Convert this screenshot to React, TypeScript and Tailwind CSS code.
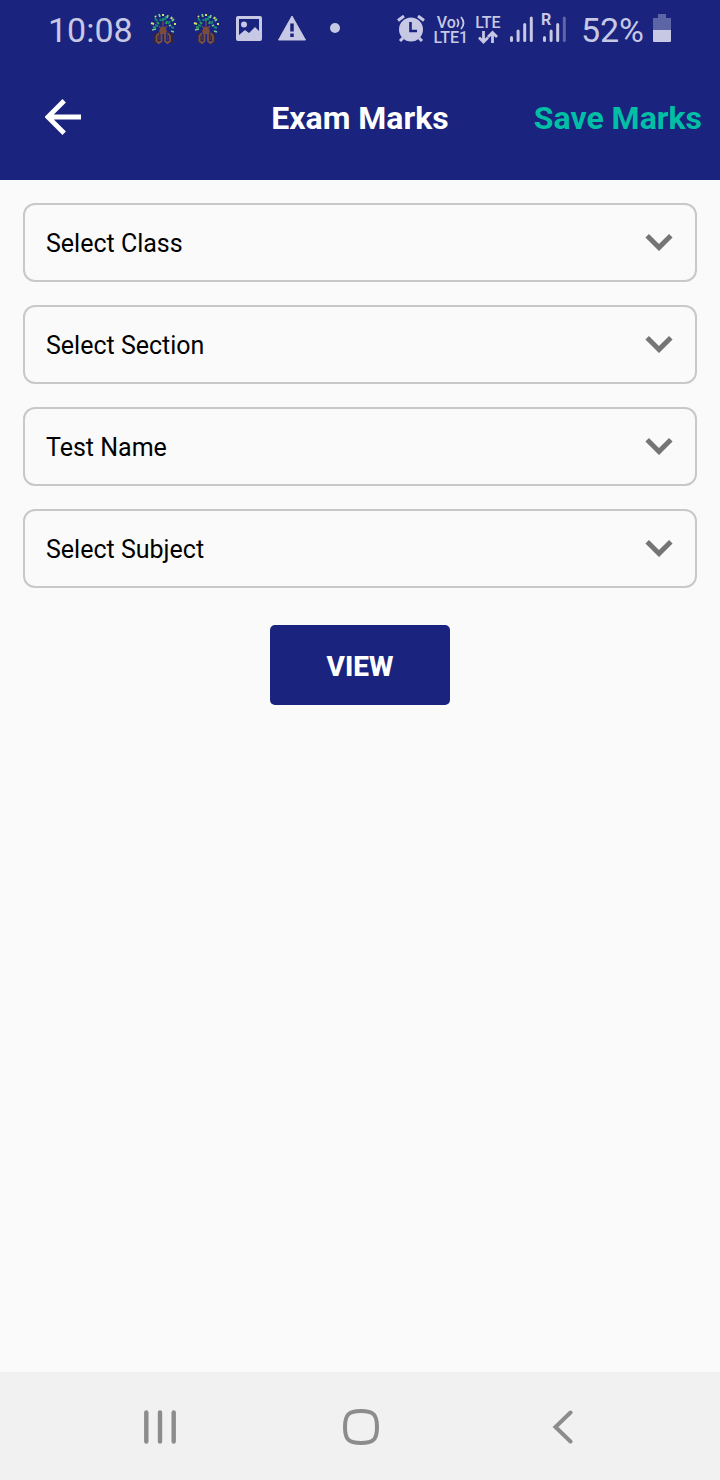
import React from "react";

const fields = [
  { id: "class", label: "Select Class" },
  { id: "section", label: "Select Section" },
  { id: "test", label: "Test Name" },
  { id: "subject", label: "Select Subject" },
];

function TreeIcon() {
  return (
    <svg className="h-8 w-7 shrink-0" viewBox="0 0 28 32" fill="none" aria-hidden="true">
      <path d="M5 20h5v10H5zM19 20h5v10h-4z" fill="#33253f" />
      <path d="M14 8v9M14 18l-4-5M14 18l4-5" stroke="#5d4660" strokeWidth="1.6" />
      <path d="M12 14h4l2 4-1 3h-6l-1-3z" fill="#7a4a3a" />
      <path d="M12.500 20v8l-2.500 2-2.500-2v-5l2.500-3M16 20v8l2.500 2 2.500-2v-5l-2.500-3" stroke="#7d5140" strokeWidth="1.8" />
      <path d="M10 22v5M18.500 22v5" stroke="#4a3350" strokeWidth="1.6" />
      <path d="M6 5l2 3M11 6l1 2M17 3l-1 4M21 8l-2 3M6 12l3 1M22 14l3 1M14 5v3" stroke="#158577" strokeWidth="2.200" />
      <path d="M10 1l1 3M3 17l4-1M19 2l-1 3M25 6l-2 2M20 13l2-1M22 18l3 1" stroke="#76c893" strokeWidth="1.800" />
      <path d="M6 3l1 1M2 10l3 1M14 1v2M23 4l-1 2M25 11h2" stroke="#d5e36a" strokeWidth="2" />
      <path d="M8 9l2 2M18 8l-1 3M4 14l3 1" stroke="#2c9c58" strokeWidth="2" />
    </svg>
  );
}

function StatusBar() {
  return (
    <div className="flex h-[60px] items-center justify-between pr-12 pl-12 text-[#c6c8e4]">
      <div className="flex items-center">
        <span className="w-[101px] text-[34px] leading-[60px]">10:08</span>
        <span className="flex -translate-y-px items-center gap-[15px]">
          <TreeIcon />
          <TreeIcon />
          <svg className="h-8 w-7" viewBox="0 0 28 32" aria-hidden="true">
            <path
              fillRule="evenodd"
              fill="currentColor"
              d="M3 3h22a2 2 0 0 1 2 2v21a2 2 0 0 1-2 2H3a2 2 0 0 1-2-2V5a2 2 0 0 1 2-2zm1 3v16l6-5 4 3 6-6 4 4V6z"
            />
            <circle cx="9" cy="11.500" r="3" fill="currentColor" />
          </svg>
          <svg className="h-8 w-7" viewBox="0 0 28 32" aria-hidden="true">
            <path d="M14 3 27.500 27H.5z" fill="currentColor" stroke="currentColor" strokeLinejoin="round" />
            <path d="M14 10.500v8M14 20.500v3.500" stroke="#1a237e" strokeWidth="3.500" />
          </svg>
          <svg className="h-8 w-7" viewBox="0 0 28 32" aria-hidden="true">
            <circle cx="14" cy="15" r="5" fill="currentColor" />
          </svg>
        </span>
      </div>
      <div className="flex items-center">
        <svg className="h-[30px] w-[30px]" viewBox="0 0 30 30" fill="none" aria-hidden="true">
          <circle cx="15" cy="14.500" r="12" fill="currentColor" />
          <path d="M2 5.500 8 1M28 5.500 22 1M7 23l-3 3M23 23l3 3" stroke="currentColor" strokeWidth="3" />
          <path d="M14.500 7v9H21" stroke="#1a237e" strokeWidth="2.600" />
        </svg>
        <span className="ml-2 flex w-[34px] flex-col items-center text-[16px] leading-[15px] font-medium">
          <span className="flex items-center">
            Vo
            <svg className="h-[14px] w-[9px] shrink-0" viewBox="0 0 9 14" fill="none" stroke="currentColor" strokeWidth="1.800" aria-hidden="true">
              <path d="M1 3q3 4 0 8M5 1q5 6 0 12" />
            </svg>
          </span>
          <span>LTE1</span>
        </span>
        <span className="ml-1.5 flex w-[28px] flex-col items-center text-[16px] leading-[15px] font-medium">
          <span>LTE</span>
          <svg className="h-[15px] w-5" viewBox="0 0 20 15" fill="none" stroke="currentColor" strokeWidth="2.800" aria-hidden="true">
            <path d="M5.500 1v11M1 7.500l4.500 4.500L10 7.500M14.500 13V3M10 7l4.500-4.500L19 7" />
          </svg>
        </span>
        <svg className="ml-2 h-8 w-6" viewBox="0 0 24 32" stroke="currentColor" strokeWidth="3" strokeLinecap="round" aria-hidden="true">
          <path d="M1.500 23.500v3M8.100 17v9.500M14.700 10.500v16M21.300 4v22.500" />
        </svg>
        <span className="relative ml-[9px] h-8 w-6">
          <svg className="h-8 w-6" viewBox="0 0 24 32" stroke="currentColor" strokeWidth="3" strokeLinecap="round" aria-hidden="true">
            <path d="M1.500 23.500v3M8.100 17v9.500M14.700 10.500v16" />
            <path d="M21.300 4v22.500" opacity="0.400" />
          </svg>
          <span className="absolute -top-0.5 -left-0.5 text-[16px] leading-4 font-bold">R</span>
        </span>
        <span className="ml-[14px] text-[34px] leading-[60px]">52%</span>
        <svg className="ml-2 h-8 w-5" viewBox="0 0 20 32" fill="currentColor" aria-hidden="true">
          <path d="M6 0h8v4h5v12H1V4h5z" opacity="0.400" />
          <path d="M1 16h18v11a1 1 0 0 1-1 1H2a1 1 0 0 1-1-1z" />
        </svg>
      </div>
    </div>
  );
}

function SelectField({ id, label }: { id: string; label: string }) {
  return (
    <div className="relative">
      <select
        id={id}
        aria-label={label}
        defaultValue=""
        className="block h-[79px] w-full appearance-none rounded-xl border-2 border-[#c8c8c8] bg-[#fafafa] pt-0.5 pr-16 pl-[21px] text-[25px] text-black"
      >
        <option value="">{label}</option>
      </select>
      <svg
        className="pointer-events-none absolute top-[30px] right-6 h-[18px] w-7"
        viewBox="0 0 28 18"
        fill="none"
        stroke="#757575"
        strokeWidth="5"
        aria-hidden="true"
      >
        <path d="M2.200 2.700 14 14.500 25.800 2.700" />
      </svg>
    </div>
  );
}

export default function App() {
  return (
    <div className="flex min-h-screen flex-col bg-[#fafafa] font-['Roboto',sans-serif]">
      <header className="bg-[#1a237e]">
        <StatusBar />
        <div className="grid h-[120px] grid-cols-[1fr_auto_1fr] items-center pr-[18px] pb-1 pl-[18px] text-[32px] font-bold">
          <button type="button" aria-label="Back" className="mb-0.5 ml-[27px] justify-self-start text-white">
            <svg className="block h-9 w-9" viewBox="0 0 36 36" fill="none" stroke="currentColor" strokeWidth="4.800" aria-hidden="true">
              <path d="M36 18H4M19.200 1.700 2.900 18l16.300 16.300" />
            </svg>
          </button>
          <h1 className="text-white">Exam Marks</h1>
          <button type="button" className="justify-self-end text-[#00bfa5]">
            Save Marks
          </button>
        </div>
      </header>

      <main className="flex flex-1 flex-col gap-[23px] p-[23px]">
        {fields.map((f) => (
          <SelectField key={f.id} id={f.id} label={f.label} />
        ))}
        <button
          type="button"
          className="mt-[14px] h-20 w-[180px] self-center rounded-[5px] bg-[#1a237e] pt-1 text-[28px] font-extrabold text-white"
        >
          VIEW
        </button>
      </main>

      <nav className="grid h-[108px] grid-cols-3 items-center justify-items-center bg-[#f1f1f1] px-[60px] text-[#8c8c8c]">
        <button type="button" aria-label="Recent apps">
          <svg className="block h-9 w-9" viewBox="0 0 36 36" fill="none" stroke="currentColor" strokeWidth="4.400" strokeLinecap="round" aria-hidden="true">
            <path d="M4.300 4.500v29M18 4.500v29M31.700 4.500v29" />
          </svg>
        </button>
        <button type="button" aria-label="Home">
          <svg className="block h-[38px] w-[38px]" viewBox="0 0 38 38" fill="none" stroke="currentColor" strokeWidth="4" aria-hidden="true">
            <path d="M20 4c12.500 0 16 3.500 16 16s-3.500 16-16 16S4 32.500 4 20 7.500 4 20 4z" />
          </svg>
        </button>
        <button type="button" aria-label="Back to previous screen">
          <svg className="ml-1 block h-9 w-9" viewBox="0 0 36 36" fill="none" stroke="currentColor" strokeWidth="4" strokeLinecap="round" aria-hidden="true">
            <path d="M26.500 4.500 11.500 19l15 14.500" />
          </svg>
        </button>
      </nav>
    </div>
  );
}
